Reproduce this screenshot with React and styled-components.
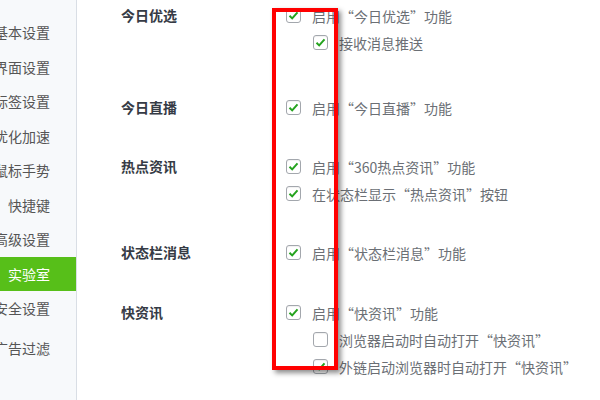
import React from 'react'
import styled, { createGlobalStyle } from 'styled-components'

const GlobalStyle = createGlobalStyle`
  html, body {
    margin: 0;
    padding: 0;
    background: #fff;
    font-family: "Noto Sans CJK SC", "Noto Sans", sans-serif;
  }
`

const Page = styled.div`
  position: relative;
  width: 600px;
  height: 400px;
  overflow: hidden;
  display: flex;
`

const Sidebar = styled.div`
  width: 76px;
  flex: none;
  background: #f7f9fb;
  border-right: 1px solid #d9dee5;
  padding-top: 15px;
  box-sizing: content-box;
`

const NavItem = styled.div`
  height: 34.5px;
  line-height: 34.5px;
  font-size: 14px;
  text-align: right;
  padding-right: 26px;
  white-space: nowrap;
  overflow: hidden;
  direction: rtl;
  color: ${p => (p.$active ? '#fff' : '#555')};
  background: ${p => (p.$active ? '#57bf19' : 'transparent')};
  margin-top: ${p => p.$gap || 0}px;
`

const Main = styled.div`
  flex: 1;
  padding: 2px 0 0 44px;
`

const Section = styled.div`
  display: grid;
  grid-template-columns: 165px 1fr;
  margin-bottom: ${p => p.$space}px;
`

const Label = styled.div`
  font-size: 14px;
  font-weight: bold;
  color: #363b45;
  height: 27px;
  line-height: 27px;
`

const Options = styled.div`
  display: flex;
  flex-direction: column;
`

const Row = styled.div`
  display: flex;
  align-items: center;
  height: 27px;
  padding-left: ${p => (p.$sub ? 27 : 0)}px;
  font-size: 14px;
  color: #6b6f75;
  white-space: nowrap;
`

const Box = styled.span`
  width: 15px;
  height: 15px;
  box-sizing: border-box;
  border: 1px solid #a3a7ad;
  border-radius: 3px;
  background: #fff;
  margin-right: 11px;
  display: flex;
  align-items: center;
  justify-content: center;
  flex: none;
  box-shadow: inset 0 1px 1px rgba(0, 0, 0, 0.06);
`

const Highlight = styled.div`
  position: absolute;
  left: 272px;
  top: 8px;
  width: 66px;
  height: 362px;
  box-sizing: border-box;
  border: 4px solid #ff0000;
  box-shadow: 3px 3px 5px rgba(0, 0, 0, 0.45);
  pointer-events: none;
`

const Check = ({ on }) => (
  <Box>
    {on && (
      <svg width="11" height="11" viewBox="0 0 11 11">
        <path d="M1.5 5.8 L4.2 8.4 L9.5 2.4" fill="none" stroke="#25a31e" strokeWidth="2" />
      </svg>
    )}
  </Box>
)

const nav = ['基本设置', '界面设置', '标签设置', '优化加速', '鼠标手势', '快捷键', '高级设置', '实验室', '安全设置', '广告过滤']

const sections = [
  {
    label: '今日优选',
    space: 38,
    rows: [
      { text: '启用“今日优选”功能', on: true },
      { text: '接收消息推送', on: true, sub: true },
    ],
  },
  { label: '今日直播', space: 32, rows: [{ text: '启用“今日直播”功能', on: true }] },
  {
    label: '热点资讯',
    space: 32,
    rows: [
      { text: '启用“360热点资讯”功能', on: true },
      { text: '在状态栏显示“热点资讯”按钮', on: true },
    ],
  },
  { label: '状态栏消息', space: 33, rows: [{ text: '启用“状态栏消息”功能', on: true }] },
  {
    label: '快资讯',
    space: 0,
    rows: [
      { text: '启用“快资讯”功能', on: true },
      { text: '浏览器启动时自动打开“快资讯”', on: false, sub: true },
      { text: '外链启动浏览器时自动打开“快资讯”', on: true, sub: true },
    ],
  },
]

const App = () => {
  return (
    <Page>
      <GlobalStyle />
      <Sidebar>
        {nav.map(n => (
          <NavItem key={n} $active={n === '实验室'} $gap={n === '广告过滤' ? 5 : 0}>
            {n}
          </NavItem>
        ))}
      </Sidebar>
      <Main>
        {sections.map(s => (
          <Section key={s.label} $space={s.space}>
            <Label>{s.label}</Label>
            <Options>
              {s.rows.map(r => (
                <Row key={r.text} $sub={r.sub}>
                  <Check on={r.on} />
                  {r.text}
                </Row>
              ))}
            </Options>
          </Section>
        ))}
      </Main>
      <Highlight />
    </Page>
  )
}

export default App
